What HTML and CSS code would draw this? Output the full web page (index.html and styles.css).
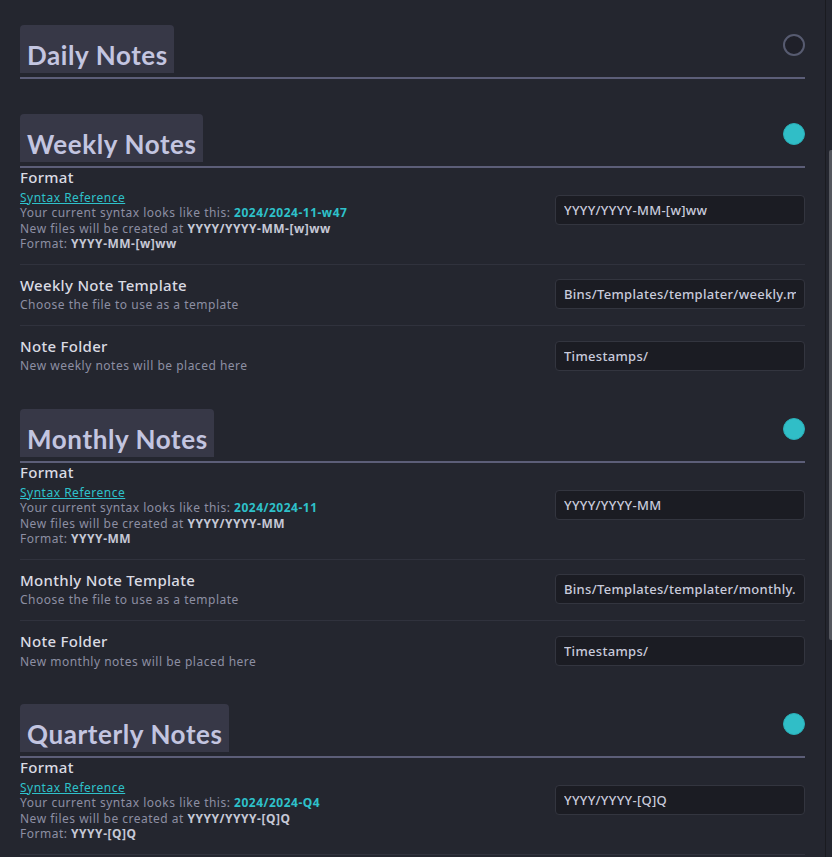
FILE: index.html
```html
<!DOCTYPE html>
<html lang="en">
<head>
<meta charset="utf-8">
<title>Periodic Notes Settings</title>
<link rel="stylesheet" href="styles.css">
</head>
<body>
<div class="app">
  <main class="content">
    <section class="section">
      <div class="section-head">
        <h2 class="section-title">Daily Notes</h2>
        <span class="toggle"></span>
      </div>
    </section>

    <section class="section">
      <div class="section-head">
        <h2 class="section-title">Weekly Notes</h2>
        <span class="toggle is-on"></span>
      </div>
      <div class="setting">
        <div class="info">
          <div class="name">Format</div>
          <div class="desc">
            <a class="link" href="#">Syntax Reference</a><br>
            Your current syntax looks like this: <b class="accent">2024/2024-11-w47</b><br>
            New files will be created at <b>YYYY/YYYY-MM-[w]ww</b><br>
            Format: <b>YYYY-MM-[w]ww</b>
          </div>
        </div>
        <input class="field" type="text" value="YYYY/YYYY-MM-[w]ww">
      </div>
      <div class="setting">
        <div class="info">
          <div class="name">Weekly Note Template</div>
          <div class="desc">Choose the file to use as a template</div>
        </div>
        <input class="field" type="text" value="Bins/Templates/templater/weekly.md">
      </div>
      <div class="setting">
        <div class="info">
          <div class="name">Note Folder</div>
          <div class="desc">New weekly notes will be placed here</div>
        </div>
        <input class="field" type="text" value="Timestamps/">
      </div>
    </section>

    <section class="section">
      <div class="section-head">
        <h2 class="section-title">Monthly Notes</h2>
        <span class="toggle is-on"></span>
      </div>
      <div class="setting">
        <div class="info">
          <div class="name">Format</div>
          <div class="desc">
            <a class="link" href="#">Syntax Reference</a><br>
            Your current syntax looks like this: <b class="accent">2024/2024-11</b><br>
            New files will be created at <b>YYYY/YYYY-MM</b><br>
            Format: <b>YYYY-MM</b>
          </div>
        </div>
        <input class="field" type="text" value="YYYY/YYYY-MM">
      </div>
      <div class="setting">
        <div class="info">
          <div class="name">Monthly Note Template</div>
          <div class="desc">Choose the file to use as a template</div>
        </div>
        <input class="field" type="text" value="Bins/Templates/templater/monthly.md">
      </div>
      <div class="setting">
        <div class="info">
          <div class="name">Note Folder</div>
          <div class="desc">New monthly notes will be placed here</div>
        </div>
        <input class="field" type="text" value="Timestamps/">
      </div>
    </section>

    <section class="section">
      <div class="section-head">
        <h2 class="section-title">Quarterly Notes</h2>
        <span class="toggle is-on"></span>
      </div>
      <div class="setting is-continued">
        <div class="info">
          <div class="name">Format</div>
          <div class="desc">
            <a class="link" href="#">Syntax Reference</a><br>
            Your current syntax looks like this: <b class="accent">2024/2024-Q4</b><br>
            New files will be created at <b>YYYY/YYYY-[Q]Q</b><br>
            Format: <b>YYYY-[Q]Q</b>
          </div>
        </div>
        <input class="field" type="text" value="YYYY/YYYY-[Q]Q">
      </div>
    </section>
  </main>
  <div class="scroll">
    <div class="thumb"></div>
  </div>
</div>
</body>
</html>
```

FILE: styles.css
```css
html, body {
  margin: 0;
  padding: 0;
  height: 100%;
  overflow: hidden;
  background: #24262f;
}

body {
  font-family: "Noto Sans", "Open Sans", sans-serif;
  color: #dadbe3;
}

.app {
  display: flex;
  height: 100%;
}

.content {
  flex: 1;
  padding: 25px 20px 0 20px;
  min-width: 0;
}

.section {
  padding-bottom: 12px;
}

.section + .section {
  margin-top: 23px;
}

.section-head {
  display: flex;
  justify-content: space-between;
  align-items: flex-start;
  padding-bottom: 4px;
  border-bottom: 2px solid #5c5e78;
}

.section-title {
  margin: 0;
  height: 48px;
  box-sizing: border-box;
  padding: 15px 6px 0 7px;
  background: #373847;
  border-radius: 4px 4px 0 0;
  font-family: "Lato", "Open Sans", sans-serif;
  font-weight: 700;
  font-size: 26px;
  line-height: 30px;
  color: #c3c5e0;
  letter-spacing: 0.6px;
}

.toggle {
  width: 22px;
  height: 22px;
  margin-top: 9px;
  box-sizing: border-box;
  border-radius: 50%;
  border: 2px solid #575b70;
  background: #1f2029;
}

.toggle.is-on {
  border: 1px solid #2aafb8;
  background: #30bec7;
}

.setting {
  display: flex;
  align-items: center;
  padding: 11px 0 12px;
  border-top: 1px solid #30323d;
}

.section-head + .setting {
  border-top: none;
  padding-top: 0;
}

.setting:last-child {
  padding-bottom: 0;
}

.setting.is-continued {
  padding-bottom: 12px;
  border-bottom: 1px solid #30323d;
}

.info {
  flex: 1;
  min-width: 0;
}

.name {
  font-size: 15px;
  line-height: 1.3;
  font-weight: 500;
  letter-spacing: 0.3px;
  color: #dadbe3;
}

.desc {
  padding-top: 2px;
  font-size: 12px;
  line-height: 1.3;
  letter-spacing: 0.5px;
  color: #8d8fa3;
}

.desc b {
  font-weight: 700;
  color: #c6c8d6;
}

.desc b.accent {
  color: #2ec1ca;
}

.link {
  color: #2ec1ca;
  text-decoration: underline;
}

.field {
  flex: none;
  width: 250px;
  height: 30px;
  margin-left: 16px;
  box-sizing: border-box;
  padding: 4px 8px;
  border: 1px solid #33353f;
  border-radius: 4px;
  background: #1b1c23;
  font-family: "Noto Sans", "Open Sans", sans-serif;
  font-size: 13px;
  font-weight: 500;
  letter-spacing: 0.3px;
  color: #c9cbdc;
  outline: none;
}

.scroll {
  flex: none;
  width: 7px;
  box-sizing: border-box;
  border-left: 1px solid #1a1b20;
  padding-left: 3px;
}

.thumb {
  width: 3px;
  height: 490px;
  margin-top: 150px;
  background: #55575e;
  border-radius: 2px 0 0 2px;
}
```
